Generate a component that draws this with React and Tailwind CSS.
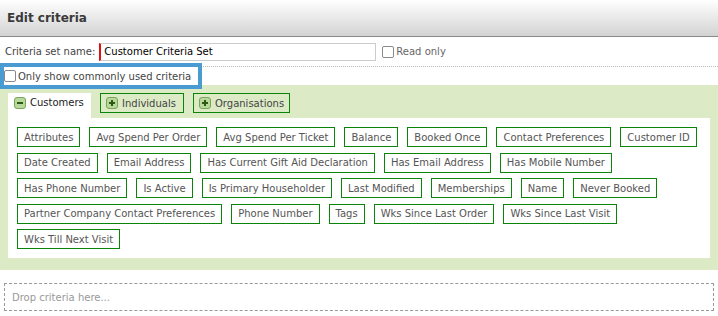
import React from 'react';

const criteria = [
  'Attributes', 'Avg Spend Per Order', 'Avg Spend Per Ticket', 'Balance', 'Booked Once',
  'Contact Preferences', 'Customer ID', 'Date Created', 'Email Address',
  'Has Current Gift Aid Declaration', 'Has Email Address', 'Has Mobile Number',
  'Has Phone Number', 'Is Active', 'Is Primary Householder', 'Last Modified', 'Memberships',
  'Name', 'Never Booked', 'Partner Company Contact Preferences', 'Phone Number', 'Tags',
  'Wks Since Last Order', 'Wks Since Last Visit', 'Wks Till Next Visit',
];

const TabIcon = ({ plus }) => (
  <svg width="12" height="12" viewBox="0 0 12 12" className="shrink-0">
    <rect x="0.5" y="0.5" width="11" height="11" rx="2.5" fill="#b9d89b" stroke="#7aa45a" />
    <rect x="3" y="5" width="6" height="2" fill="#2d5a12" />
    {plus && <rect x="5" y="3" width="2" height="6" fill="#2d5a12" />}
  </svg>
);

const Box = () => (
  <span className="inline-block w-[12px] h-[12px] border border-[#8a8a8a] rounded-[2px] bg-white shrink-0" />
);

export default function App() {
  return (
    <div className="w-[718px] h-[316px] bg-white overflow-hidden text-[10px] text-[#444]" style={{ fontFamily: '"DejaVu Sans", Verdana, sans-serif' }}>
      <div className="h-[37px] flex items-center px-[7px] border-b border-[#8a8a8a] bg-gradient-to-b from-white to-[#d3d3d3]">
        <h1 className="text-[12px] font-bold text-[#3a3a3a]">Edit criteria</h1>
      </div>

      <div className="h-[30px] flex items-center px-[5px] border-b border-dotted border-[#bbb]">
        <span>Criteria set name:</span>
        <div className="ml-[4px] w-[277px] h-[18px] flex items-center border border-[#ccc] border-l-2 border-l-[#e01010] pl-[3px] text-black">
          Customer Criteria Set
        </div>
        <label className="ml-[6px] flex items-center gap-[2px] text-[#666]">
          <Box />
          <span>Read only</span>
        </label>
      </div>

      <div className="relative z-10 ml-[4px] w-[194px] h-[18px] flex items-center whitespace-nowrap outline-4 outline-[#4a9bd2]">
        <Box />
        <span className="ml-[2px]">Only show commonly used criteria</span>
      </div>

      <div className="bg-[#dcebc6] pt-[8px] px-[8px] pb-[12px]">
        <div className="flex items-start gap-[9px]">
          <div className="h-[25px] w-[83px] bg-white flex items-start pt-[4px] pl-[6px] gap-[4px] text-[#222]">
            <TabIcon />
            <span className="leading-[12px]">Customers</span>
          </div>
          <div className="h-[20px] w-[84px] flex items-center gap-[4px] px-[5px] border border-[#0a850a]">
            <TabIcon plus />
            <span>Individuals</span>
          </div>
          <div className="h-[20px] w-[97px] flex items-center gap-[4px] px-[5px] border border-[#0a850a]">
            <TabIcon plus />
            <span>Organisations</span>
          </div>
        </div>
        <div className="bg-white h-[140px] pt-[9px] px-[9px] flex flex-wrap content-start gap-x-[9px] gap-y-[5.5px]">
          {criteria.map((c) => (
            <div key={c} className="h-[20px] flex items-center px-[6px] border border-[#0a850a] text-[#555]">
              {c}
            </div>
          ))}
        </div>
      </div>

      <div className="mt-[13px] mx-[4px] h-[28px] flex items-center pl-[7px] border border-dashed border-[#999] text-[#999]">
        Drop criteria here...
      </div>
    </div>
  );
}
